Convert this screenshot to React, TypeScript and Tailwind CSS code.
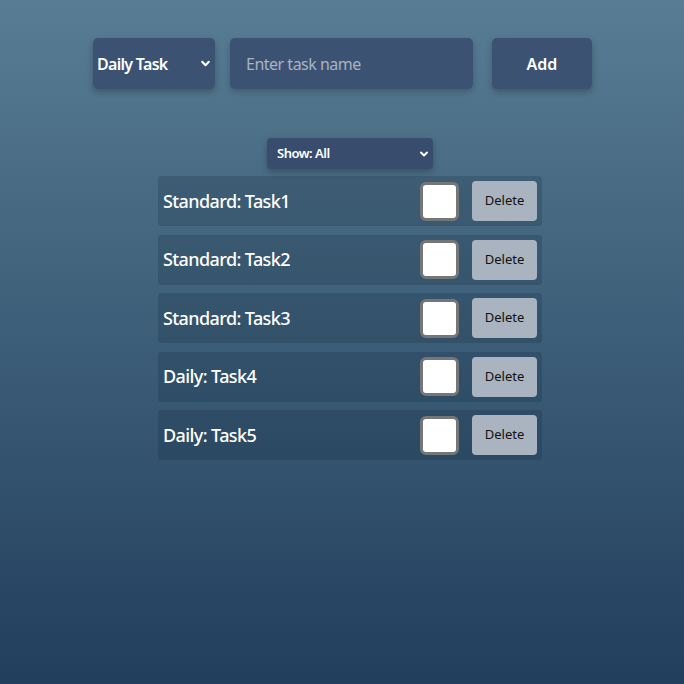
import React from "react";

const Chevron = ({ size = 10 }: { size?: number }) => (
  <svg width={size} height={size} viewBox="0 0 10 10" fill="none">
    <path d="M2 3.5 L5 6.5 L8 3.5" stroke="white" strokeWidth="1.9" strokeLinecap="round" strokeLinejoin="round" />
  </svg>
);

const tasks = ["Standard: Task1", "Standard: Task2", "Standard: Task3", "Daily: Task4", "Daily: Task5"];

export default function App() {
  return (
    <div
      className="w-[684px] h-[684px] bg-gradient-to-b from-[#587d93] to-[#223f5d] text-white"
      style={{ fontFamily: '"Noto Sans", "Open Sans", sans-serif' }}
    >
      <div className="flex pt-[38px] pl-[93px] items-start">
        <div className="w-[122px] h-[51px] rounded-[5px] bg-[#3c5272] shadow-[0_3px_6px_rgba(0,0,0,0.25)] flex items-center justify-between pl-[4px] pr-[4px]">
          <span className="text-[16px] font-semibold tracking-[-0.7px]">Daily Task</span>
          <Chevron size={11} />
        </div>
        <div className="ml-[15px] w-[243px] h-[51px] rounded-[5px] bg-[#3c5272] shadow-[0_3px_6px_rgba(0,0,0,0.2)] flex items-center pl-[16px]">
          <span className="text-[16px] text-[#a9b3c1] tracking-[-0.5px]">Enter task name</span>
        </div>
        <div className="ml-[19px] w-[100px] h-[51px] rounded-[5px] bg-[#3c5272] shadow-[0_3px_6px_rgba(0,0,0,0.25)] flex items-center justify-center">
          <span className="text-[16px] font-semibold">Add</span>
        </div>
      </div>

      <div className="flex justify-center pl-[16px] mt-[49px]">
        <div className="w-[166px] h-[31px] rounded-[4px] bg-[#384d6e] shadow-[0_3px_6px_rgba(0,0,0,0.25)] flex items-center justify-between pl-[10px] pr-[4px]">
          <span className="text-[13px] font-semibold tracking-[-0.5px]">Show: All</span>
          <Chevron size={10} />
        </div>
      </div>

      <div className="flex flex-col items-center pl-[16px] mt-[7px] gap-[8.5px]">
        {tasks.map((t) => (
          <div key={t} className="w-[384px] h-[50px] rounded-[3px] bg-[rgba(20,40,60,0.22)] flex items-center pl-[5px] pr-[5px]">
            <span className="text-[18px] font-medium tracking-[-0.6px] flex-1">{t}</span>
            <div className="w-[39px] h-[39px] rounded-[6px] bg-white border-[3px] border-[#767676]" />
            <div className="ml-[13px] w-[65px] h-[40px] rounded-[4px] bg-[#a9b4c0] flex items-center justify-center text-[13px] text-[#111]">
              Delete
            </div>
          </div>
        ))}
      </div>
    </div>
  );
}
